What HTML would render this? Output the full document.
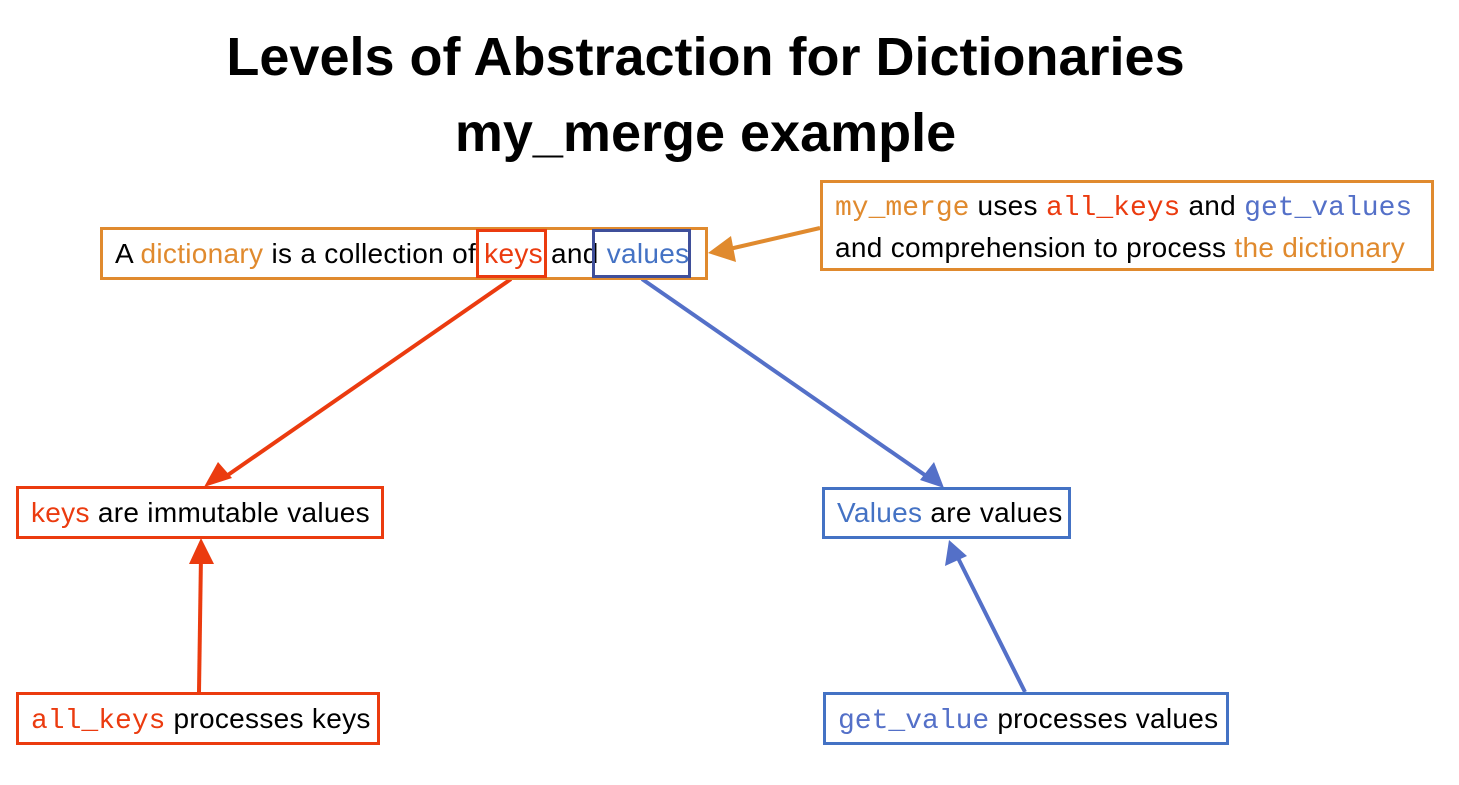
<!DOCTYPE html>
<html><head><meta charset="utf-8"><style>
body{margin:0;width:1459px;height:785px;background:#fff;position:relative;overflow:hidden;font-family:"Liberation Sans",sans-serif}
.t{position:absolute;left:0;width:1411px;text-align:center;font-weight:bold;font-size:54px;line-height:60px;color:#000}
.b{position:absolute;box-sizing:border-box;border:3px solid;font-size:28px;letter-spacing:0.3px;white-space:nowrap;color:#000;padding-left:12px}
.o{color:#E08A2E}.r{color:#EB3B0F}.bl{color:#4472C4}.bb{color:#5470C8}
.m{font-family:"Liberation Mono",monospace;letter-spacing:0;font-size:28px}
svg{position:absolute;left:0;top:0}
</style></head><body>
<div class="t" style="top:27px">Levels of Abstraction for Dictionaries</div>
<div class="t" style="top:103px">my_merge example</div>
<svg width="1459" height="785">
<g stroke-width="4" fill="none">
<line x1="511" y1="279" x2="225" y2="477" stroke="#EB3B0F"/>
<line x1="199" y1="692" x2="201" y2="555" stroke="#EB3B0F"/>
<line x1="642" y1="279" x2="932" y2="480" stroke="#5470C8"/>
<line x1="1025" y1="692" x2="957" y2="556" stroke="#5470C8"/>
<line x1="820" y1="228" x2="725" y2="250" stroke="#E08A2E"/>
</g>
<polygon points="204,487 218,462 232,478" fill="#EB3B0F"/>
<polygon points="201,538 189,564 214,564" fill="#EB3B0F"/>
<polygon points="944,488 920,480 934,462" fill="#5470C8"/>
<polygon points="949,540 945,566 967,556" fill="#5470C8"/>
<polygon points="708,253 731,236 736,262" fill="#E08A2E"/>
</svg>
<div class="b" style="left:100px;top:227px;width:608px;height:53px;border-color:#E08A2E;line-height:47px">A <span class="o">dictionary</span> is a collection of <span class="r">keys</span> and <span class="bl">values</span></div>
<div class="b" style="left:476px;top:229px;width:71px;height:49px;border-color:#EB3B0F"></div>
<div class="b" style="left:592px;top:229px;width:99px;height:49px;border-color:#3F4F9A"></div>
<div class="b" style="left:820px;top:180px;width:614px;height:91px;border-color:#E08A2E;line-height:39px;padding-top:3px"><span class="o m">my_merge</span> uses <span class="r m">all_keys</span> and <span class="bb m">get_values</span><br>and comprehension to process <span class="o">the dictionary</span></div>
<div class="b" style="left:16px;top:486px;width:368px;height:53px;border-color:#EB3B0F;line-height:47px"><span class="r">keys</span> are immutable values</div>
<div class="b" style="left:822px;top:487px;width:249px;height:52px;border-color:#4472C4;line-height:46px"><span class="bl">Values</span> are values</div>
<div class="b" style="left:16px;top:692px;width:364px;height:53px;border-color:#EB3B0F;line-height:47px"><span class="r m">all_keys</span> processes keys</div>
<div class="b" style="left:823px;top:692px;width:406px;height:53px;border-color:#4472C4;line-height:47px"><span class="bb m">get_value</span> processes values</div>
</body></html>
